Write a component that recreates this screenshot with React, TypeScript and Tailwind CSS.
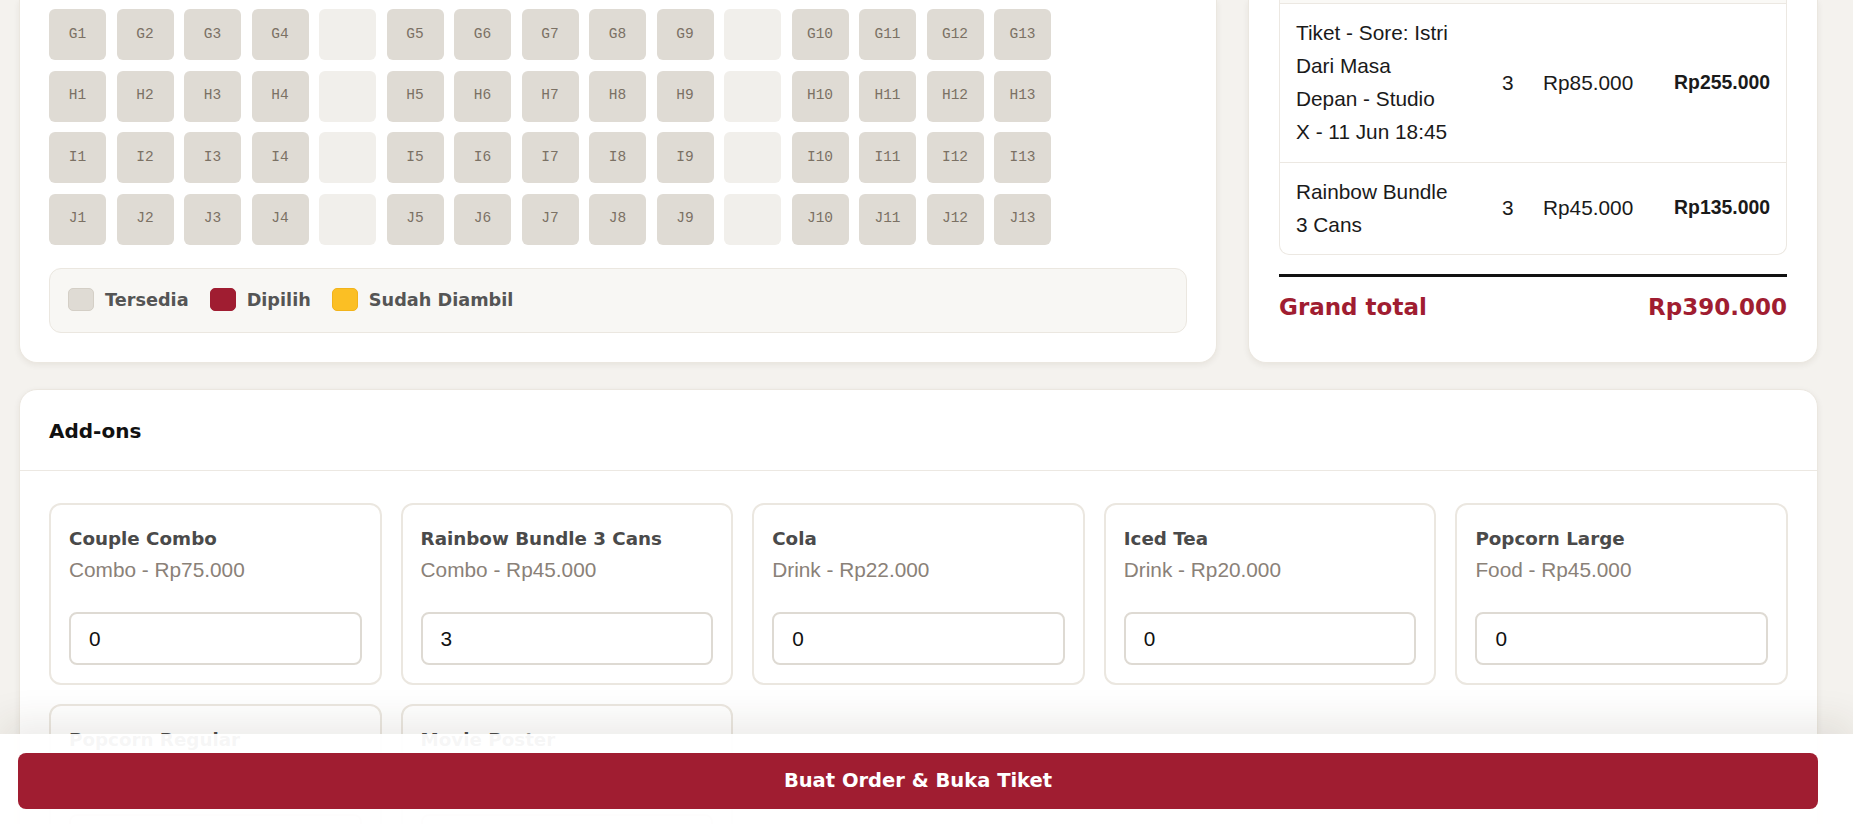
const sans = "font-['Liberation_Sans',Arial,sans-serif]";
const heading = "font-['DejaVu_Sans',Verdana,sans-serif] font-bold";
const mono = "font-['Liberation_Mono','Courier_New',monospace]";

type Cell = string | null;

// 13 seats per row, aisles after seat 4 and seat 9
const seatRow = (r: string): Cell[] => [
  `${r}1`, `${r}2`, `${r}3`, `${r}4`, null,
  `${r}5`, `${r}6`, `${r}7`, `${r}8`, `${r}9`, null,
  `${r}10`, `${r}11`, `${r}12`, `${r}13`,
];

const rows = ["G", "H", "I", "J"];

const orderLines = [
  { name: "Tiket - Sore: Istri Dari Masa Depan - Studio X - 11 Jun 18:45", qty: 3, price: "Rp85.000", total: "Rp255.000" },
  { name: "Rainbow Bundle 3 Cans", qty: 3, price: "Rp45.000", total: "Rp135.000" },
];

const addons = [
  { name: "Couple Combo", meta: "Combo - Rp75.000", qty: 0 },
  { name: "Rainbow Bundle 3 Cans", meta: "Combo - Rp45.000", qty: 3 },
  { name: "Cola", meta: "Drink - Rp22.000", qty: 0 },
  { name: "Iced Tea", meta: "Drink - Rp20.000", qty: 0 },
  { name: "Popcorn Large", meta: "Food - Rp45.000", qty: 0 },
  { name: "Popcorn Regular", meta: "Food - Rp35.000", qty: 0 },
  { name: "Movie Poster", meta: "Merch - Rp50.000", qty: 0 },
];

function Seat({ label }: { label: Cell }) {
  if (!label) return <div className="h-[51px] rounded-md bg-[#f1efeb]" />;
  return (
    <button className={`h-[51px] rounded-md bg-[#dfdbd4] text-[14.5px] text-[#7b7164] ${mono}`}>
      {label}
    </button>
  );
}

function Legend({ color, label }: { color: string; label: string }) {
  return (
    <div className="flex items-center gap-[11px]">
      <span className={`w-[26px] h-[23px] rounded-[5px] border ${color}`} />
      <span className={`${heading} text-[17.7px] text-[#555]`}>{label}</span>
    </div>
  );
}

export default function App() {
  return (
    <div className={`min-h-screen bg-[#f4f2ee] ${sans} pb-[120px]`}>
      <div className="pl-[19px] pr-[35px]">
        <div className="flex gap-[31px] items-stretch">
          {/* Seat map */}
          <section className="flex-1 bg-white border border-t-0 border-[#ebe7e0] rounded-b-[18px] shadow-[0_2px_6px_rgba(60,40,20,0.07)] px-[29px] pt-[9px] pb-[29px]">
            <div className="grid grid-cols-[repeat(15,57px)] gap-[10.5px]">
              {rows.flatMap((r) => seatRow(r).map((s, i) => <Seat key={`${r}-${i}`} label={s} />))}
            </div>
            <div className="mt-[23px] h-[65px] flex items-center gap-[21px] px-[18px] rounded-xl border border-[#ebe7e0] bg-[#f8f7f4]">
              <Legend color="bg-[#dfdbd4] border-[#d4cfc6]" label="Tersedia" />
              <Legend color="bg-[#a01d31] border-[#a01d31]" label="Dipilih" />
              <Legend color="bg-[#fbbf24] border-[#f2b31a]" label="Sudah Diambil" />
            </div>
          </section>

          {/* Order summary */}
          <aside className="w-[570px] bg-white border border-t-0 border-[#ebe7e0] rounded-b-[18px] shadow-[0_2px_6px_rgba(60,40,20,0.07)] px-[30px]">
            <div className="border border-t-0 border-[#ece8e2] rounded-b-[10px]">
              <div className="h-[3px] bg-[#faf9f6]" />
              {orderLines.map((l, i) => (
                <div
                  key={i}
                  className="flex items-center border-t border-[#ece8e2] pt-3 pb-[13.5px] text-[20.8px] leading-[33px] text-[#1a1a1a]"
                >
                  <div className="w-[187px] px-4">{l.name}</div>
                  <div className="w-[60px] pl-[35px]">{l.qty}</div>
                  <div className="w-[121px] px-4">{l.price}</div>
                  <div className="flex-1 px-4 text-right font-bold text-[19.4px]">{l.total}</div>
                </div>
              ))}
            </div>
            <div className="mt-[19px] h-[3px] bg-[#111]" />
            <div className={`mt-[13px] flex items-center justify-between ${heading} text-[23px] text-[#a01d31]`}>
              <span>Grand total</span>
              <span>Rp390.000</span>
            </div>
          </aside>
        </div>

        {/* Add-ons */}
        <section className="mt-[26px] bg-white border border-[#ebe7e0] rounded-[18px] shadow-[0_2px_6px_rgba(60,40,20,0.07)]">
          <div className="px-[29px] pt-[27px] pb-[24px] border-b border-[#ece8e2]">
            <h2 className={`${heading} text-[20px] leading-[29px] text-[#111]`}>Add-ons</h2>
          </div>
          <div className="grid grid-cols-5 gap-[19px] px-[29px] pt-[32px] pb-[30px]">
            {addons.map((a) => (
              <div key={a.name} className="border-2 border-[#ebe7e0] rounded-xl px-[18px] pt-[20px] pb-[18px]">
                <div className={`${heading} text-[18.3px] leading-[27.5px] text-[#4a4a4a]`}>{a.name}</div>
                <div className="mt-[2px] text-[20.8px] leading-[31px] text-[#8a8178]">{a.meta}</div>
                <input
                  type="number"
                  defaultValue={a.qty}
                  className="mt-[27px] w-full h-[53px] px-[18px] border-2 border-[#dedad3] rounded-lg text-[20.8px] text-[#111] bg-white outline-none"
                />
              </div>
            ))}
          </div>
        </section>
      </div>

      {/* Sticky checkout bar */}
      <div className="fixed bottom-0 inset-x-0 bg-white/95 shadow-[0_-14px_36px_rgba(60,40,20,0.09)] pl-[18px] pr-[35px] pt-[19px] pb-[15px]">
        <button className={`w-full h-[56px] rounded-lg bg-[#a01d31] text-white ${heading} text-[19.5px]`}>
          Buat Order &amp; Buka Tiket
        </button>
      </div>
    </div>
  );
}
